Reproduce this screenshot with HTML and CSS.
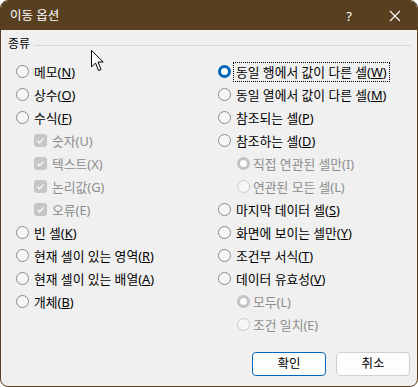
FILE: index.html
```html
<!DOCTYPE html>
<html lang="ko">
<head>
<meta charset="utf-8">
<title>이동 옵션</title>
<link rel="stylesheet" href="styles.css">
</head>
<body>
<div class="window">
  <div class="titlebar">
    <span class="title">이동 옵션</span>
    <span class="help">?</span>
    <span class="close"><svg width="12" height="12" viewBox="0 0 12 12"><path d="M1 1 L11 11 M11 1 L1 11" stroke="#fff" stroke-width="1.1" fill="none"/></svg></span>
  </div>
  <div class="body">
    <div class="group-head"><span>종류</span><span class="rule"></span></div>
    <div class="columns">
      <div class="col">
        <div class="opt"><span class="radio"></span><span>메모(<u>N</u>)</span></div>
        <div class="opt"><span class="radio"></span><span>상수(<u>O</u>)</span></div>
        <div class="opt"><span class="radio"></span><span>수식(<u>F</u>)</span></div>
        <div class="opt sub disabled"><span class="check"><svg width="9" height="9" viewBox="0 0 9 9"><path d="M1.5 4.8 L3.6 6.8 L7.6 2.4" stroke="#fff" stroke-width="1.2" fill="none"/></svg></span><span>숫자(U)</span></div>
        <div class="opt sub disabled"><span class="check"><svg width="9" height="9" viewBox="0 0 9 9"><path d="M1.5 4.8 L3.6 6.8 L7.6 2.4" stroke="#fff" stroke-width="1.2" fill="none"/></svg></span><span>텍스트(X)</span></div>
        <div class="opt sub disabled"><span class="check"><svg width="9" height="9" viewBox="0 0 9 9"><path d="M1.5 4.8 L3.6 6.8 L7.6 2.4" stroke="#fff" stroke-width="1.2" fill="none"/></svg></span><span>논리값(G)</span></div>
        <div class="opt sub disabled"><span class="check"><svg width="9" height="9" viewBox="0 0 9 9"><path d="M1.5 4.8 L3.6 6.8 L7.6 2.4" stroke="#fff" stroke-width="1.2" fill="none"/></svg></span><span>오류(E)</span></div>
        <div class="opt"><span class="radio"></span><span>빈 셀(<u>K</u>)</span></div>
        <div class="opt"><span class="radio"></span><span>현재 셀이 있는 영역(<u>R</u>)</span></div>
        <div class="opt"><span class="radio"></span><span>현재 셀이 있는 배열(<u>A</u>)</span></div>
        <div class="opt"><span class="radio"></span><span>개체(<u>B</u>)</span></div>
      </div>
      <div class="col">
        <div class="opt"><span class="radio checked"></span><span class="focus">동일 행에서 값이 다른 셀(<u>W</u>)</span></div>
        <div class="opt"><span class="radio"></span><span>동일 열에서 값이 다른 셀(<u>M</u>)</span></div>
        <div class="opt"><span class="radio"></span><span>참조되는 셀(<u>P</u>)</span></div>
        <div class="opt"><span class="radio"></span><span>참조하는 셀(<u>D</u>)</span></div>
        <div class="opt sub2 disabled"><span class="radio dchecked"></span><span>직접 연관된 셀만(I)</span></div>
        <div class="opt sub2 disabled"><span class="radio dis"></span><span>연관된 모든 셀(L)</span></div>
        <div class="opt"><span class="radio"></span><span>마지막 데이터 셀(<u>S</u>)</span></div>
        <div class="opt"><span class="radio"></span><span>화면에 보이는 셀만(<u>Y</u>)</span></div>
        <div class="opt"><span class="radio"></span><span>조건부 서식(<u>T</u>)</span></div>
        <div class="opt"><span class="radio"></span><span>데이터 유효성(<u>V</u>)</span></div>
        <div class="opt sub2 disabled"><span class="radio dchecked"></span><span>모두(L)</span></div>
        <div class="opt sub2 disabled"><span class="radio dis"></span><span>조건 일치(E)</span></div>
      </div>
    </div>
    <div class="footer">
      <button class="btn primary">확인</button>
      <button class="btn">취소</button>
    </div>
  </div>
  <svg class="cursor" width="13" height="22" viewBox="0 0 13 22"><path d="M0.5 0.5 L0.5 17 L4.5 13 L7.5 20.5 L10 19.5 L7 12 L12.2 12 Z" fill="#fff" stroke="#000" stroke-width="1"/></svg>
</div>
</body>
</html>
```
FILE: styles.css
```css
* { box-sizing: border-box; }
html, body { margin: 0; padding: 0; background: #ffffff; }
body {
  font-family: "Noto Sans", "Noto Sans CJK KR", sans-serif;
  font-size: 12px;
  color: #000;
}
.window {
  position: relative;
  width: 418px;
  height: 387px;
  border: 1px solid #5a3f20;
  border-radius: 8px;
  background: #f0f0f0;
  overflow: hidden;
}
.titlebar {
  height: 29px;
  background: #583f20;
  color: #fff;
  display: flex;
  align-items: center;
  padding-left: 9px;
}
.title { flex: 1; font-size: 12.5px; line-height: 16px; }
.help { width: 12px; text-align: center; font-size: 13px; margin-right: 34px; }
.close { display: flex; width: 12px; margin-right: 16px; }
.body { padding: 6px 6px 0 7px; }
.group-head {
  display: flex;
  align-items: center;
  line-height: 16px;
  height: 16px;
  gap: 4px;
}
.rule { flex: 1; height: 1px; background: #d7d7d7; margin-top: 2px; }
.columns {
  display: grid;
  grid-template-columns: 202px 1fr;
  margin-top: 8px;
  padding-left: 8px;
}
.opt {
  height: 23px;
  display: flex;
  align-items: center;
  gap: 5px;
  white-space: nowrap;
  font-size: 12.8px;
  line-height: 16px;
}
.opt u { text-decoration: underline; text-underline-offset: 1px; }
.opt.sub { padding-left: 18px; gap: 5px; }
.opt.sub2 { padding-left: 19px; gap: 3px; }
.disabled { color: #8d8d8d; }
.radio {
  width: 13px;
  height: 13px;
  border-radius: 50%;
  border: 1px solid #8a8a8a;
  background: #f6f6f6;
  flex: none;
}
.radio.checked { border: 3px solid #0062b8; background: #ffffff; }
.radio.dchecked { border: 3px solid #c2c2c2; background: #fbfbfb; }
.radio.dis { border: 1px solid #cbcbcb; background: #f6f6f6; }
.check {
  width: 13px;
  height: 13px;
  border-radius: 3px;
  background: #c6c6c6;
  display: flex;
  align-items: center;
  justify-content: center;
  flex: none;
}
.focus { outline: 1px dotted #000; outline-offset: 1px; padding: 0 1px; margin-left: -1px; }
.footer {
  display: flex;
  justify-content: flex-end;
  gap: 10px;
  margin-top: 16px;
  padding-right: 1px;
}
.btn {
  width: 74px;
  height: 24px;
  font-family: inherit;
  font-size: 12.5px;
  line-height: 16px;
  color: #000;
  background: #fdfdfd;
  border: 1px solid #d0d0d0;
  border-radius: 4px;
  padding: 0;
}
.btn.primary { border-color: #0067c0; }
.cursor { position: absolute; left: 90px; top: 49px; }
```
